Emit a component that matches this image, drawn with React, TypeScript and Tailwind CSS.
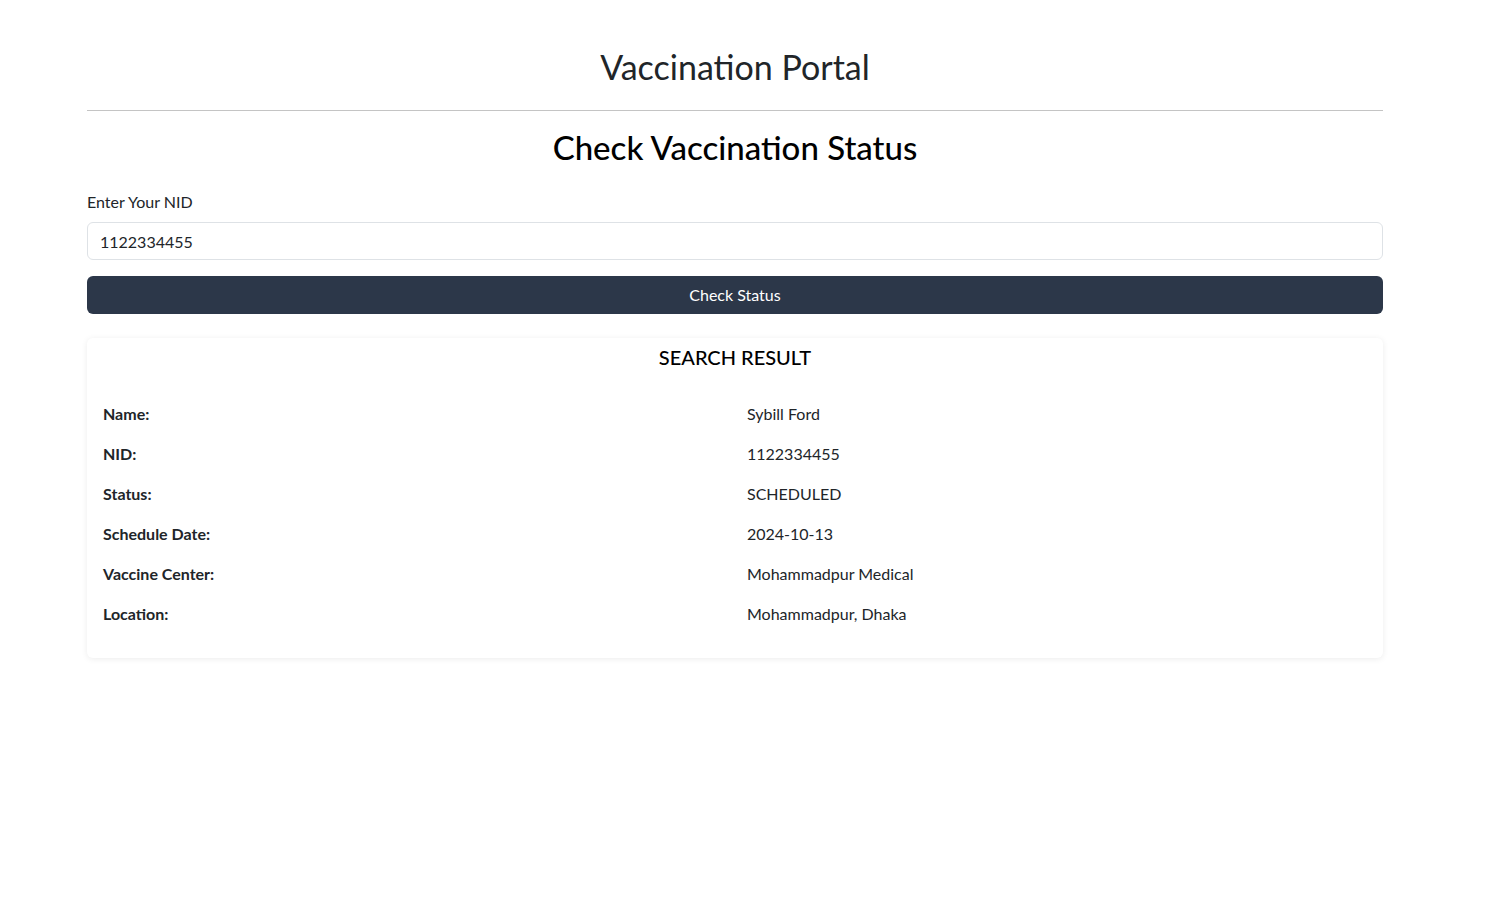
import { useState } from "react";

const rows = [
  { label: "Name:", value: "Sybill Ford" },
  { label: "NID:", value: "1122334455" },
  { label: "Status:", value: "SCHEDULED" },
  { label: "Schedule Date:", value: "2024-10-13" },
  { label: "Vaccine Center:", value: "Mohammadpur Medical" },
  { label: "Location:", value: "Mohammadpur, Dhaka" },
];

const App = () => {
  const [nid, setNid] = useState("1122334455");

  return (
    <div className="min-h-screen bg-white font-['Lato',sans-serif] text-[#212529]">
      <main className="ml-[87px] w-[1296px] pt-[47px]">
        <h1 className="text-center text-[34px] leading-[40px]">Vaccination Portal</h1>
        <hr className="mt-[23px] border-t border-[#c4c4c4]" />
        <h2 className="mt-[16px] text-center text-[33px] leading-[40px] font-medium text-black">
          Check Vaccination Status
        </h2>
        <div className="mt-[23px]">
          <label className="block text-base leading-6">Enter Your NID</label>
          <input
            className="mt-[8px] h-[38px] w-full rounded-md border border-[#dee2e6] px-3 text-base outline-none"
            value={nid}
            onChange={(e) => setNid(e.target.value)}
          />
          <button className="mt-4 h-[38px] w-full rounded-md bg-[#2c3749] text-base text-white">
            Check Status
          </button>
        </div>
        <div className="mt-6 rounded-md bg-white px-4 pb-6 pt-[5px] shadow-[0_1px_6px_rgba(0,0,0,0.08)]">
          <h3 className="text-center text-xl leading-7 font-medium text-black">SEARCH RESULT</h3>
          <div className="mt-[23px] flex flex-col">
            {rows.map((r) => (
              <div key={r.label} className="grid h-10 grid-cols-2 items-center">
                <span className="font-bold">{r.label}</span>
                <span className="pl-3">{r.value}</span>
              </div>
            ))}
          </div>
        </div>
      </main>
    </div>
  );
};

export default App;
